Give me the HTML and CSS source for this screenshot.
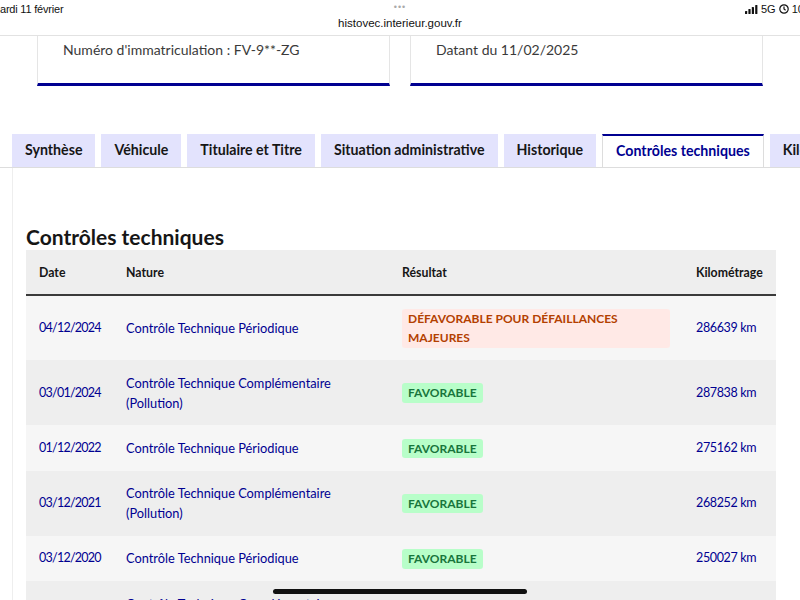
FILE: index.html
```html
<!DOCTYPE html>
<html lang="fr">
<head>
  <meta charset="UTF-8">
  <meta name="viewport" content="width=device-width, initial-scale=1.0">
  <title>HistoVec - Contrôles techniques</title>
  <link rel="stylesheet" href="styles.css">
</head>
<body>
  <div class="status-bar">
    <div class="time"><span>mardi 11 février</span></div>
    <div class="address">
      <div class="dots">&bull;&bull;&bull;</div>
      <div class="url">histovec.interieur.gouv.fr</div>
    </div>
    <div class="indicators">
      <svg class="signal" width="13" height="9" viewBox="0 0 13 9">
        <rect x="0" y="6" width="2.2" height="3" rx="0.6"/>
        <rect x="3.4" y="4" width="2.2" height="5" rx="0.6"/>
        <rect x="6.8" y="2" width="2.2" height="7" rx="0.6"/>
        <rect x="10.2" y="0" width="2.2" height="9" rx="0.6"/>
      </svg>
      <span>5G</span>
      <svg class="clock" width="10" height="10" viewBox="0 0 10 10">
        <circle cx="5" cy="5" r="4.2" fill="none" stroke="#111" stroke-width="1.2"/>
        <path d="M5 2.6 V5 L6.6 6.2" fill="none" stroke="#111" stroke-width="1.2"/>
      </svg>
      <span>100 %</span>
    </div>
  </div>

  <div class="summary">
    <div class="card">Numéro d'immatriculation : FV-9**-ZG</div>
    <div class="card">Datant du 11/02/2025</div>
  </div>

  <ul class="tabs">
    <li class="tab">Synthèse</li>
    <li class="tab">Véhicule</li>
    <li class="tab">Titulaire et Titre</li>
    <li class="tab">Situation administrative</li>
    <li class="tab">Historique</li>
    <li class="tab active">Contrôles techniques</li>
    <li class="tab">Kilométrage</li>
  </ul>

  <div class="panel">
    <h2>Contrôles techniques</h2>
    <table class="ct-table">
      <colgroup>
        <col class="col-date">
        <col class="col-nature">
        <col class="col-result">
        <col class="col-km">
      </colgroup>
      <thead>
        <tr>
          <th>Date</th>
          <th>Nature</th>
          <th>Résultat</th>
          <th>Kilométrage</th>
        </tr>
      </thead>
      <tbody>
        <tr>
          <td class="num date">04/12/2024</td>
          <td>Contrôle Technique Périodique</td>
          <td><span class="badge bad">Défavorable pour défaillances majeures</span></td>
          <td class="num">286639 km</td>
        </tr>
        <tr>
          <td class="num date">03/01/2024</td>
          <td>Contrôle Technique Complémentaire (Pollution)</td>
          <td><span class="badge good">Favorable</span></td>
          <td class="num">287838 km</td>
        </tr>
        <tr>
          <td class="num date">01/12/2022</td>
          <td>Contrôle Technique Périodique</td>
          <td><span class="badge good">Favorable</span></td>
          <td class="num">275162 km</td>
        </tr>
        <tr>
          <td class="num date">03/12/2021</td>
          <td>Contrôle Technique Complémentaire (Pollution)</td>
          <td><span class="badge good">Favorable</span></td>
          <td class="num">268252 km</td>
        </tr>
        <tr>
          <td class="num date">03/12/2020</td>
          <td>Contrôle Technique Périodique</td>
          <td><span class="badge good">Favorable</span></td>
          <td class="num">250027 km</td>
        </tr>
        <tr>
          <td class="num date">02/12/2019</td>
          <td>Contrôle Technique Complémentaire (Pollution)</td>
          <td><span class="badge good">Favorable</span></td>
          <td class="num">231914 km</td>
        </tr>
      </tbody>
    </table>
  </div>

  <div class="home-indicator"></div>
</body>
</html>
```

FILE: styles.css
```css
body {
  margin: 0;
  width: 800px;
  height: 600px;
  overflow: hidden;
  font-family: Lato, 'Noto Sans', sans-serif;
  color: #161616;
  background: #fff;
  position: relative;
}
.status-bar {
  display: flex;
  justify-content: space-between;
  height: 35px;
  border-bottom: 1px solid #e2e2e2;
  font-family: 'Liberation Sans', sans-serif;
  font-size: 11px;
  color: #111;
}
.time {
  width: 160px;
  overflow: hidden;
  padding-top: 3px;
  letter-spacing: -0.2px;
}
.time span {
  margin-left: -9px;
}
.address {
  text-align: center;
}
.dots {
  color: #aaa;
  font-size: 9px;
  letter-spacing: 1px;
  line-height: 12px;
  padding-top: 1px;
}
.url {
  font-size: 11.5px;
  margin-top: 4px;
}
.indicators {
  width: 160px;
  display: flex;
  align-items: center;
  gap: 3px;
  height: 18px;
  overflow: hidden;
  white-space: nowrap;
  padding-left: 105px;
  box-sizing: border-box;
}
.indicators svg,
.indicators span {
  flex-shrink: 0;
}
.signal rect { fill: #111; }
.summary {
  display: flex;
  gap: 20px;
  padding: 0 37px;
}
.card {
  flex: 1;
  height: 50px;
  border: 1px solid #e5e5e5;
  border-top: none;
  border-bottom: 3px solid #000091;
  padding: 5px 0 0 25px;
  font-size: 14px;
  color: #3a3a3a;
  box-sizing: border-box;
}
.tabs {
  display: flex;
  gap: 6px;
  list-style: none;
  margin: 48px 0 0;
  padding: 0 0 0 12px;
  border-bottom: 1px solid #ddd;
  white-space: nowrap;
  overflow: hidden;
}
.tab {
  background: #e3e3fd;
  padding: 0 13px;
  height: 33px;
  line-height: 32px;
  font-size: 14.2px;
  font-weight: bold;
  color: #161616;
  flex-shrink: 0;
}
.tab.active {
  background: #fff;
  color: #000091;
  border-top: 2px solid #000091;
  border-left: 1px solid #ddd;
  border-right: 1px solid #ddd;
  height: 31px;
  line-height: 30px;
}
.panel {
  margin-left: 12px;
  padding: 56px 13px 0;
  border-left: 1px solid #eee;
}
h2 {
  margin: 0;
  font-size: 21px;
  line-height: 26px;
  font-weight: bold;
  color: #161616;
}
.ct-table {
  width: 750px;
  table-layout: fixed;
  border-collapse: collapse;
  font-size: 12.8px;
}
.col-date { width: 87px; }
.col-nature { width: 276px; }
.col-result { width: 294px; }
.col-km { width: 93px; }
.ct-table th {
  background: #eee;
  text-align: left;
  font-weight: bold;
  font-size: 12.3px;
  height: 44px;
  padding: 0 13px;
  border-bottom: 2px solid #3a3a3a;
}
.ct-table td {
  padding: 12.5px 13px;
  line-height: 20px;
  color: #000091;
  vertical-align: middle;
}
.ct-table td.num {
  font-size: 12.5px;
  letter-spacing: -0.35px;
}
.ct-table td.date {
  letter-spacing: -0.75px;
}
.ct-table tbody tr:nth-child(odd) { background: #f6f6f6; }
.ct-table tbody tr:nth-child(even) { background: #eee; }
.badge {
  display: inline-block;
  padding: 0 6px;
  border-radius: 3px;
  font-size: 12px;
  font-weight: bold;
  text-transform: uppercase;
  line-height: 19.5px;
}
.badge.good {
  background: #b8fec9;
  color: #18753c;
}
.badge.bad {
  background: #ffe9e6;
  color: #b34000;
  width: 100%;
  box-sizing: border-box;
}
.home-indicator {
  position: absolute;
  left: 273px;
  bottom: 6px;
  width: 254px;
  height: 5px;
  border-radius: 3px;
  background: #111;
}
```
